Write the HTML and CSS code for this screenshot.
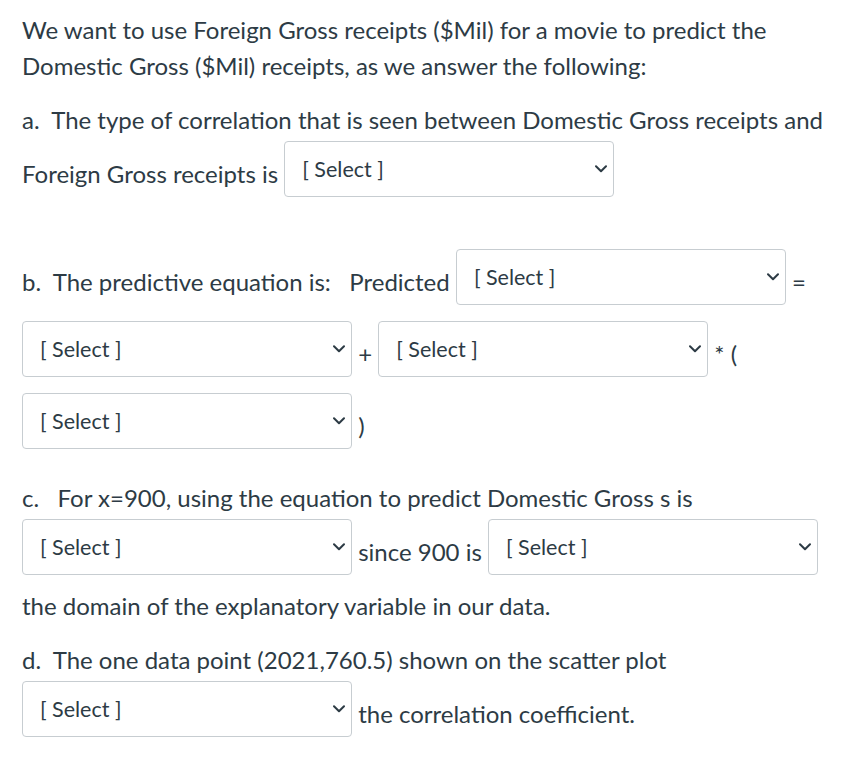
FILE: index.html
```html
<!DOCTYPE html>
<html lang="en">
<head>
<meta charset="utf-8">
<title>Question</title>
<link rel="stylesheet" href="styles.css">
</head>
<body>
<div class="page">
  <p class="first">We want to use Foreign Gross receipts ($Mil) for a movie to predict the Domestic Gross ($Mil) receipts, as we answer the following:</p>
  <p>a.&nbsp; The type of correlation that is seen between Domestic Gross receipts and Foreign Gross receipts is <span class="select"><span class="label">[ Select ]</span><svg class="chev" viewBox="0 0 12 8" width="12" height="8"><polyline points="1,1.2 6,6.2 11,1.2"/></svg></span></p>
  <p class="sep">b.&nbsp; The predictive equation is:&nbsp;&nbsp; Predicted <span class="select"><span class="label">[ Select ]</span><svg class="chev" viewBox="0 0 12 8" width="12" height="8"><polyline points="1,1.2 6,6.2 11,1.2"/></svg></span> = <span class="select"><span class="label">[ Select ]</span><svg class="chev" viewBox="0 0 12 8" width="12" height="8"><polyline points="1,1.2 6,6.2 11,1.2"/></svg></span> + <span class="select"><span class="label">[ Select ]</span><svg class="chev" viewBox="0 0 12 8" width="12" height="8"><polyline points="1,1.2 6,6.2 11,1.2"/></svg></span> * ( <span class="select"><span class="label">[ Select ]</span><svg class="chev" viewBox="0 0 12 8" width="12" height="8"><polyline points="1,1.2 6,6.2 11,1.2"/></svg></span> )</p>
  <p>c.&nbsp;&nbsp; For x=900, using the equation to predict Domestic Gross s is <span class="select"><span class="label">[ Select ]</span><svg class="chev" viewBox="0 0 12 8" width="12" height="8"><polyline points="1,1.2 6,6.2 11,1.2"/></svg></span> since 900 is <span class="select"><span class="label">[ Select ]</span><svg class="chev" viewBox="0 0 12 8" width="12" height="8"><polyline points="1,1.2 6,6.2 11,1.2"/></svg></span> the domain of the explanatory variable in our data.</p>
  <p>d.&nbsp; The one data point (2021,760.5) shown on the scatter plot <span class="select"><span class="label">[ Select ]</span><svg class="chev" viewBox="0 0 12 8" width="12" height="8"><polyline points="1,1.2 6,6.2 11,1.2"/></svg></span> the correlation coefficient.</p>
</div>
</body>
</html>
```

FILE: styles.css
```css
html, body {
  margin: 0;
  padding: 0;
  background: #ffffff;
}

.page {
  padding: 12px 10px 0 22px;
  font-family: Lato, "Liberation Sans", sans-serif;
  font-size: 24px;
  line-height: 36px;
  color: #2d3b45;
}

.page p {
  margin: 18px 0;
}

.page p.first {
  margin-top: 0;
}

.page p.sep {
  margin-top: 36px;
}

.select {
  display: inline-flex;
  align-items: center;
  justify-content: space-between;
  box-sizing: border-box;
  width: 330px;
  height: 56px;
  padding: 0 6px 0 17px;
  margin: 3px 0 13px 0;
  border: 1px solid #c7cdd1;
  border-radius: 4px;
  background: #ffffff;
  vertical-align: 5.5px;
}

.label {
  font-size: 21.5px;
  line-height: 36px;
  color: #2d3b45;
}

.chev {
  display: block;
  fill: none;
  stroke: #2d3b45;
  stroke-width: 2;
  stroke-linecap: round;
  stroke-linejoin: round;
}
```
